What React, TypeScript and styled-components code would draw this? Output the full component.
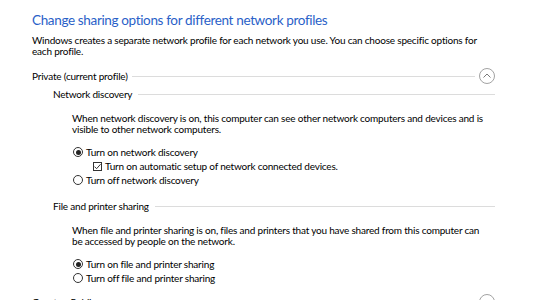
import styled, { createGlobalStyle } from "styled-components";

const GlobalStyle = createGlobalStyle`
  html, body {
    margin: 0;
    padding: 0;
    background: #ffffff;
  }
  body {
    font-family: Lato, "Noto Sans", sans-serif;
    color: #000000;
  }
`;

type Choice = {
  id: string;
  label: string;
  kind: "radio" | "check";
  checked: boolean;
  nested?: boolean;
};

type Group = {
  id: string;
  title: string;
  text: string;
  choices: Choice[];
};

const groups: Group[] = [
  {
    id: "discovery",
    title: "Network discovery",
    text:
      "When network discovery is on, this computer can see other network computers and devices and is visible to other network computers.",
    choices: [
      { id: "nd-on", label: "Turn on network discovery", kind: "radio", checked: true },
      {
        id: "nd-auto",
        label: "Turn on automatic setup of network connected devices.",
        kind: "check",
        checked: true,
        nested: true,
      },
      { id: "nd-off", label: "Turn off network discovery", kind: "radio", checked: false },
    ],
  },
  {
    id: "sharing",
    title: "File and printer sharing",
    text:
      "When file and printer sharing is on, files and printers that you have shared from this computer can be accessed by people on the network.",
    choices: [
      { id: "fp-on", label: "Turn on file and printer sharing", kind: "radio", checked: true },
      { id: "fp-off", label: "Turn off file and printer sharing", kind: "radio", checked: false },
    ],
  },
];

const ChevronUp = () => (
  <svg width="8" height="5" viewBox="0 0 8 5">
    <path d="M0.5 4.5 L4 1 L7.5 4.5" fill="none" stroke="#7a7a7a" strokeWidth="1" />
  </svg>
);

const Settings = () => {
  return (
    <Page>
      <GlobalStyle />
      <Title>Change sharing options for different network profiles</Title>
      <Intro>
        Windows creates a separate network profile for each network you use. You can choose specific
        options for each profile.
      </Intro>

      <ProfileHeader>
        <ProfileName>Private (current profile)</ProfileName>
        <Rule />
        <Toggle aria-label="Collapse">
          <ChevronUp />
        </Toggle>
      </ProfileHeader>

      {groups.map((group) => (
        <Section key={group.id}>
          <SectionHeader>
            <SectionName>{group.title}</SectionName>
            <Rule />
          </SectionHeader>
          <Description>{group.text}</Description>
          <Choices>
            {group.choices.map((c) => (
              <Option key={c.id} $nested={c.nested}>
                {c.kind === "radio" ? <Radio $checked={c.checked} /> : <Check $checked={c.checked}>
                  {c.checked && (
                    <svg width="9" height="9" viewBox="0 0 9 9">
                      <path d="M1.5 4.6 L3.6 6.7 L7.6 2.2" fill="none" stroke="#333" strokeWidth="1" />
                    </svg>
                  )}
                </Check>}
                <span>{c.label}</span>
              </Option>
            ))}
          </Choices>
        </Section>
      ))}

      <ProfileHeader $last>
        <ProfileName>Guest or Public</ProfileName>
        <Rule />
        <Toggle aria-label="Expand">
          <ChevronUp />
        </Toggle>
      </ProfileHeader>
    </Page>
  );
};

const Page = styled.div`
  width: 463px;
  padding: 11px 0 0 32px;
  font-size: 10px;
  letter-spacing: -0.2px;
`;

const Title = styled.h1`
  margin: 0;
  font-size: 13.5px;
  line-height: 18px;
  font-weight: 400;
  letter-spacing: -0.35px;
  color: #2a5fc8;
`;

const Intro = styled.p`
  margin: 6px 0 0;
  line-height: 11px;
`;

const ProfileHeader = styled.div<{ $last?: boolean }>`
  display: flex;
  align-items: center;
  height: 16px;
  margin-top: ${(p) => (p.$last ? "9px" : "11px")};
`;

const ProfileName = styled.span`
  white-space: nowrap;
  margin-right: 4px;
`;

const Rule = styled.span`
  flex: 1;
  height: 1px;
  background: #dcdcdc;
`;

const Toggle = styled.button`
  width: 16px;
  height: 16px;
  margin-left: 4px;
  padding: 0 0 1px;
  border: 1px solid #a3a3a3;
  border-radius: 50%;
  background: #ffffff;
  display: flex;
  align-items: center;
  justify-content: center;
`;

const Section = styled.section`
  padding-left: 21px;
  margin-top: 3px;

  & + & {
    margin-top: 12px;
  }
`;

const SectionHeader = styled.div`
  display: flex;
  align-items: center;
  height: 14px;
  gap: 6px;
`;

const SectionName = styled.span`
  white-space: nowrap;
`;

const Description = styled.p`
  margin: 12px 8px 0 19px;
  line-height: 11px;
`;

const Choices = styled.div`
  margin-top: 10px;
  padding-left: 20px;
  display: flex;
  flex-direction: column;
`;

const Option = styled.label<{ $nested?: boolean }>`
  display: flex;
  align-items: center;
  gap: 3px;
  height: 14px;
  padding-left: ${(p) => (p.$nested ? "20px" : "0")};
`;

const Radio = styled.span<{ $checked: boolean }>`
  box-sizing: border-box;
  width: 10px;
  height: 10px;
  border: 1px solid #333333;
  border-radius: 50%;
  display: flex;
  align-items: center;
  justify-content: center;

  &::after {
    content: "";
    width: 5px;
    height: 5px;
    border-radius: 50%;
    background: ${(p) => (p.$checked ? "#222222" : "transparent")};
  }
`;

const Check = styled.span<{ $checked: boolean }>`
  box-sizing: border-box;
  width: 9px;
  height: 9px;
  border: 1px solid #333333;
  display: flex;
  align-items: center;
  justify-content: center;

  svg {
    flex: none;
  }
`;

export default function App() {
  return <Settings />;
}
